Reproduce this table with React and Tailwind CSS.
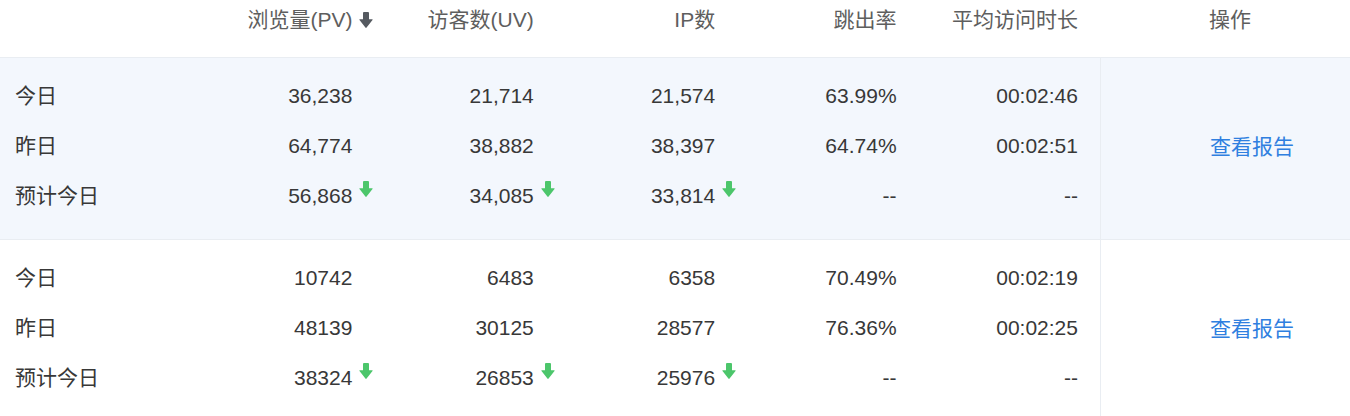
import React from "react";

const FONT = { fontFamily: '"Liberation Sans", "Noto Sans CJK SC", sans-serif' };

function Arrow({ color, className }) {
  return (
    <svg width="14" height="17" viewBox="0 0 14 17" className={className}>
      <path d="M4 1 Q4 0 5 0 H9 Q10 0 10 1 V7.2 H13.2 Q14 7.2 13.5 7.9 L7.6 15.6 Q7 16.3 6.4 15.6 L0.5 7.9 Q0 7.2 0.8 7.2 H4 Z" fill={color} />
    </svg>
  );
}

function NumCell({ value, arrow }) {
  return (
    <div className="w-[181.4px] flex justify-end pr-[22px]">
      <span className="relative">
        {value}
        {arrow && (
          <Arrow color="#4cc66b" className="absolute left-full ml-[7px] top-[1px]" />
        )}
      </span>
    </div>
  );
}

const groups = [
  {
    bg: "bg-[#f3f7fd]",
    rows: [
      ["今日", "36,238", "21,714", "21,574", "63.99%", "00:02:46", false],
      ["昨日", "64,774", "38,882", "38,397", "64.74%", "00:02:51", false],
      ["预计今日", "56,868", "34,085", "33,814", "--", "--", true],
    ],
  },
  {
    bg: "bg-white",
    rows: [
      ["今日", "10742", "6483", "6358", "70.49%", "00:02:19", false],
      ["昨日", "48139", "30125", "28577", "76.36%", "00:02:25", false],
      ["预计今日", "38324", "26853", "25976", "--", "--", true],
    ],
  },
];

export default function App() {
  const headers = ["访客数(UV)", "IP数", "跳出率", "平均访问时长"];
  return (
    <div className="w-[1350px] h-[416px] overflow-hidden bg-white text-[21px] text-[#383838]" style={FONT}>
      <div className="h-[58px] flex items-start pt-[4px] border-b border-[#e9edf2] text-[#5e5e5e]">
        <div className="w-[193px]" />
        <div className="w-[181.4px] flex justify-end pr-[22px]">
          <span className="relative">
            浏览量(PV)
            <Arrow color="#555a60" className="absolute left-full ml-[7px] top-[8px]" />
          </span>
        </div>
        {headers.map((h) => (
          <div key={h} className="w-[181.4px] flex justify-end pr-[22px]">
            {h}
          </div>
        ))}
        <div className="flex-1 pl-[109px]">操作</div>
      </div>
      {groups.map((g, gi) => (
        <div key={gi} className={`flex ${g.bg} ${gi === 0 ? "border-b border-[#e9edf2]" : ""}`}>
          <div className="w-[1100px] pt-[13px] pb-[18px]">
            {g.rows.map((r, ri) => (
              <div key={ri} className="h-[50px] flex items-center">
                <div className="w-[193px] pl-[15px]">{r[0]}</div>
                <NumCell value={r[1]} arrow={r[6]} />
                <NumCell value={r[2]} arrow={r[6]} />
                <NumCell value={r[3]} arrow={r[6]} />
                <NumCell value={r[4]} />
                <NumCell value={r[5]} />
              </div>
            ))}
          </div>
          <div className="flex-1 border-l border-[#e9edf2] flex items-center pl-[109px] pb-[4px]">
            <span className="text-[#2f7fe0]">查看报告</span>
          </div>
        </div>
      ))}
    </div>
  );
}
